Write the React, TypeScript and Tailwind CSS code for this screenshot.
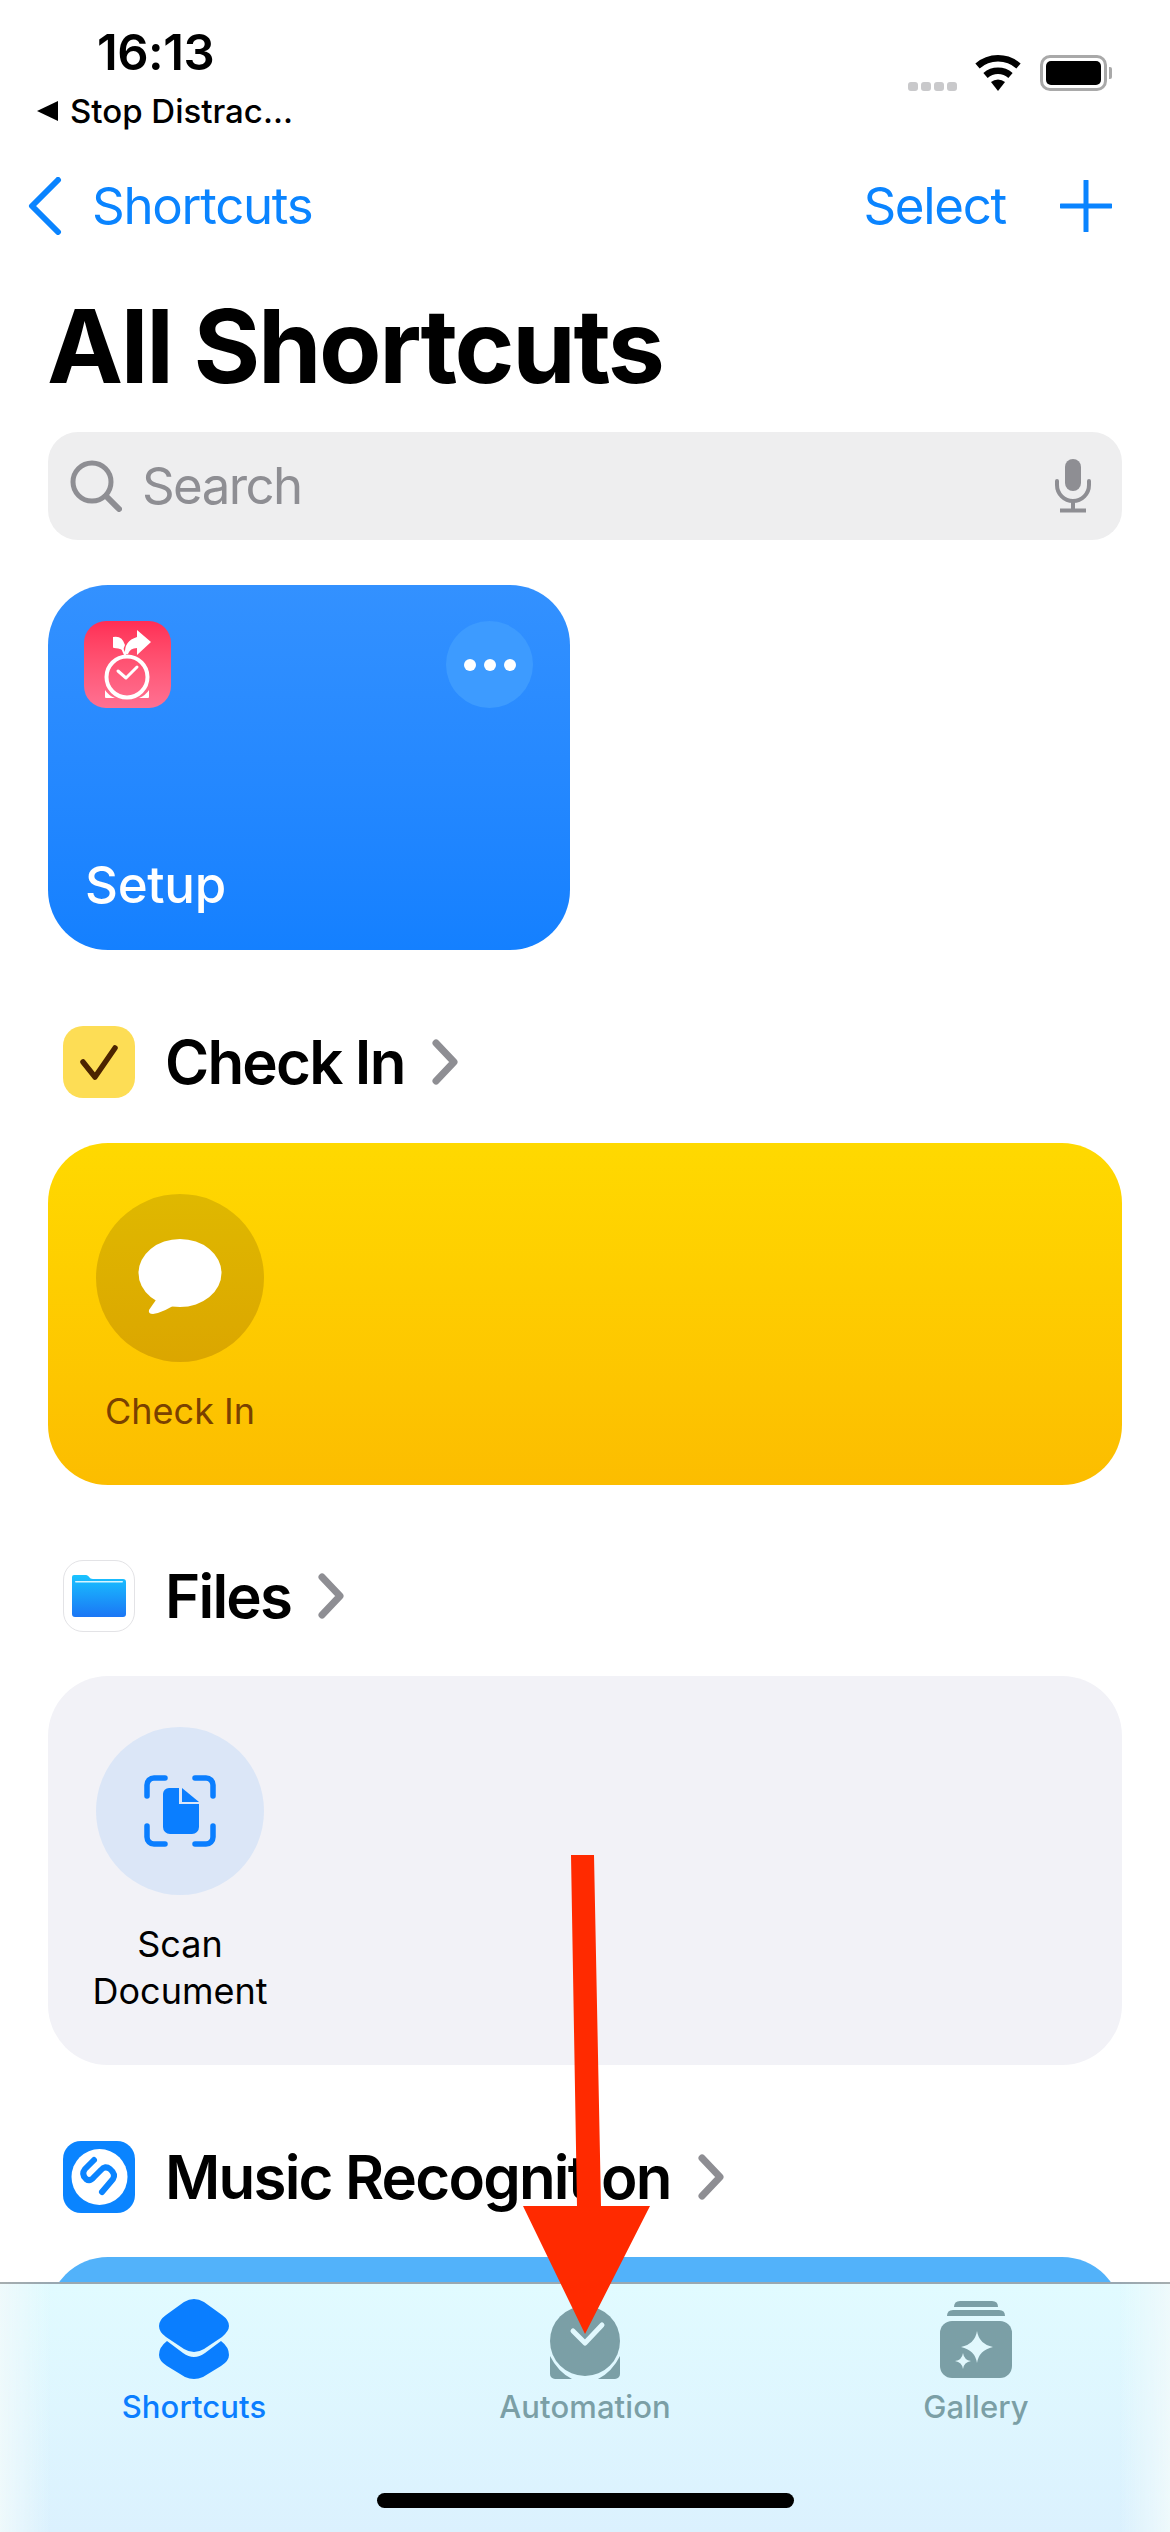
const font = "font-['Inter','Noto_Sans',sans-serif]";

function Chevron({ height = 46 }: { height?: number }) {
  return (
    <svg width="26" height={height} viewBox="0 0 26 46" fill="none">
      <path d="M4 4 L22 23 L4 42" stroke="#8e8e93" strokeWidth="7" strokeLinecap="round" strokeLinejoin="round" />
    </svg>
  );
}

function SectionHeader({ icon, title }: { icon: React.ReactNode; title: string }) {
  return (
    <div className="flex h-[72px] items-center pl-[63px]">
      {icon}
      <span className="ml-[30px] text-[60px] font-semibold leading-[72px] tracking-[-1.8px] text-black">{title}</span>
      <span className="ml-[27px] flex">
        <Chevron />
      </span>
    </div>
  );
}

function CheckIcon() {
  return (
    <div className="h-[72px] w-[72px] rounded-[20px] bg-[#fddd55]">
      <svg width="72" height="72" viewBox="0 0 72 72" fill="none">
        <path d="M20 36 L32 51 L52 22" stroke="#4b2300" strokeWidth="5.5" strokeLinecap="round" strokeLinejoin="round" />
      </svg>
    </div>
  );
}

function FilesIcon() {
  return (
    <div className="flex h-[72px] w-[72px] items-center justify-center rounded-[20px] border border-[#e3e3e6] bg-white">
      <svg width="54" height="42" viewBox="0 0 54 42">
        <defs>
          <linearGradient id="folder" x1="0" y1="0" x2="0" y2="1">
            <stop offset="0" stopColor="#19c3ff" />
            <stop offset="1" stopColor="#1b76f5" />
          </linearGradient>
        </defs>
        <path d="M2 0 H14 C17 0 17 4 21 4 H51 A3 3 0 0 1 54 7 V39 A3 3 0 0 1 51 42 H3 A3 3 0 0 1 0 39 V2 A2 2 0 0 1 2 0 Z" fill="url(#folder)" />
        <rect x="3" y="6" width="48" height="1.6" rx="0.8" fill="#d8f5ff" />
      </svg>
    </div>
  );
}

function ShazamIcon() {
  return (
    <div className="h-[72px] w-[72px] rounded-[18px] bg-[#0a84ff]">
      <svg width="72" height="72" viewBox="0 0 72 72" fill="none">
        <circle cx="36.5" cy="36" r="28" fill="#fff" />
        <path
          d="M31 19 L22 28 Q18 33 23 38 Q27 41 31 36 L38 29 Q42 24 47 28 Q53 33 50 38 L39 51"
          stroke="#0a84ff"
          strokeWidth="6"
          strokeLinecap="round"
          strokeLinejoin="round"
        />
      </svg>
    </div>
  );
}

function Wifi() {
  return (
    <svg width="48" height="36" viewBox="0 0 48 36" fill="none">
      <path d="M24 36 L17 27 A11 11 0 0 1 31 27 Z" fill="#000" />
      <path d="M11.5 20.5 A19 19 0 0 1 36.5 20.5" stroke="#000" strokeWidth="6.5" />
      <path d="M3.5 11 A31 31 0 0 1 44.5 11" stroke="#000" strokeWidth="6.5" />
    </svg>
  );
}

function StatusBar() {
  return (
    <div className="flex h-[150px] justify-between">
      <div className="flex flex-col">
        <span className="mt-[24px] pl-[97px] text-[49px] font-semibold leading-[58px] tracking-[-0.5px] text-black">16:13</span>
        <div className="mt-[12px] flex h-[34px] items-center pl-[37px]">
          <svg width="22" height="22" viewBox="0 0 22 22">
            <path d="M0 11 L21 1 V21 Z" fill="#000" />
          </svg>
          <span className="ml-[11px] text-[33px] font-medium leading-[34px] text-black">Stop Distrac...</span>
        </div>
      </div>
      <div className="flex items-start pr-[58px] pt-[55px]">
        <div className="mt-[27px] flex gap-[3px]">
          <div className="h-[9px] w-[10px] rounded-[3px] bg-[#c9c9cb]" />
          <div className="h-[9px] w-[10px] rounded-[3px] bg-[#c9c9cb]" />
          <div className="h-[9px] w-[10px] rounded-[3px] bg-[#c9c9cb]" />
          <div className="h-[9px] w-[10px] rounded-[3px] bg-[#c9c9cb]" />
        </div>
        <div className="ml-[17px]">
          <Wifi />
        </div>
        <div className="ml-[18px] flex items-center">
          <div className="h-[36px] w-[67px] rounded-[10px] border-[3px] border-[#a9a9a9] p-[3px]">
            <div className="h-full w-full rounded-[5px] bg-black" />
          </div>
          <div className="ml-[2px] h-[12px] w-[3px] rounded-r-[2px] bg-[#a9a9a9]" />
        </div>
      </div>
    </div>
  );
}

function NavBar() {
  return (
    <div className="mt-[28px] flex h-[56px] items-center justify-between pl-[28px] pr-[58px]">
      <div className="flex items-center">
        <svg width="34" height="58" viewBox="0 0 34 58" fill="none">
          <path d="M30 3 L4 29 L30 55" stroke="#0a84ff" strokeWidth="6" strokeLinecap="round" strokeLinejoin="round" />
        </svg>
        <span className="ml-[30px] text-[51px] leading-[56px] tracking-[-1.3px] text-[#0a84ff]">Shortcuts</span>
      </div>
      <div className="flex items-center">
        <span className="text-[51px] leading-[56px] tracking-[-1.3px] text-[#0a84ff]">Select</span>
        <svg className="ml-[54px]" width="52" height="52" viewBox="0 0 52 52" fill="none">
          <path d="M26 1 V51 M1 26 H51" stroke="#0a84ff" strokeWidth="5" strokeLinecap="round" />
        </svg>
      </div>
    </div>
  );
}

function SearchBar() {
  return (
    <div className="mx-[48px] mt-[36px] flex h-[108px] items-center rounded-[30px] bg-[#eeeeef] pl-[22px] pr-[31px]">
      <svg width="52" height="52" viewBox="0 0 52 52" fill="none">
        <circle cx="22" cy="22" r="19" stroke="#8e8e93" strokeWidth="5" />
        <path d="M36 36 L49 49" stroke="#8e8e93" strokeWidth="6" strokeLinecap="round" />
      </svg>
      <span className="ml-[20px] flex-1 text-[51px] leading-[56px] tracking-[-1.6px] text-[#8e8e93]">Search</span>
      <svg width="36" height="54" viewBox="0 0 36 54" fill="none">
        <rect x="10" y="0" width="16" height="32" rx="8" fill="#8e8e93" />
        <path d="M2 22 V26 A16 16 0 0 0 34 26 V22" stroke="#8e8e93" strokeWidth="4" strokeLinecap="round" />
        <path d="M18 42 V51 M5 51.5 H31" stroke="#8e8e93" strokeWidth="4" />
      </svg>
    </div>
  );
}

function PinkIcon() {
  return (
    <div className="h-[87px] w-[87px] rounded-[22px] bg-gradient-to-b from-[#ff2d55] to-[#ff7092]">
      <svg width="87" height="87" viewBox="0 0 87 87" fill="none">
        <path d="M53 9 L67 21 L53 34 V27 Q46 27 44 33 L41 33 Q40 20 53 16 Z" fill="#fff" />
        <path d="M29 16 Q38 14 41 24 L39 29 Q34 27 30 27 Q29 27 29 26 Z" fill="#fff" />
        <path d="M38 27 L42 36" stroke="#fff" strokeWidth="2" />
        <circle cx="43" cy="56" r="20.5" stroke="#fff" strokeWidth="4" />
        <path d="M34 50 L42 57 L53 46" stroke="#fff" strokeWidth="3" strokeLinecap="round" strokeLinejoin="round" />
        <path d="M21 69 Q24 74 31 77 H22 A1 1 0 0 1 21 76 Z M65 69 Q62 74 55 77 H64 A1 1 0 0 0 65 76 Z" fill="#fff" />
      </svg>
    </div>
  );
}

function SetupCard() {
  return (
    <div className="ml-[48px] mt-[45px] flex h-[365px] w-[522px] flex-col justify-between rounded-[60px] bg-gradient-to-b from-[#3391ff] to-[#1480ff] px-[36px] pb-[35px] pt-[36px]">
      <div className="flex items-start justify-between pr-[1px]">
        <PinkIcon />
        <div className="flex h-[87px] w-[87px] items-center justify-center gap-[8px] rounded-full bg-[#3d9bff]">
          <div className="h-[12px] w-[12px] rounded-full bg-white" />
          <div className="h-[12px] w-[12px] rounded-full bg-white" />
          <div className="h-[12px] w-[12px] rounded-full bg-white" />
        </div>
      </div>
      <span className="pl-[1px] text-[51px] font-medium leading-[60px] tracking-[-0.3px] text-white">Setup</span>
    </div>
  );
}

function TabBar() {
  return (
    <div className="absolute bottom-0 left-0 right-0 h-[250px] border-t-[2px] border-[#000]/30 bg-[linear-gradient(90deg,#eef9fb_0,rgba(238,249,251,0)_50px,rgba(238,249,251,0)_1120px,#eef9fb_1170px),linear-gradient(180deg,#e1fbff,#dbf1fe)]">
      <div className="flex">
        <div className="flex w-[388px] flex-col items-center pt-[15px]">
          <svg className="shrink-0" width="70" height="80" viewBox="0 0 70 80">
            <path d="M8 42 L24 54 Q35 62 46 54 L62 42 Q70 48 70 56 Q70 62 62 67 L44 78 Q35 82 26 78 L8 67 Q0 62 0 56 Q0 48 8 42 Z" fill="#0a7eff" />
            <path d="M25 3 Q35 -3 45 3 L63 16 Q70 21 70 27 Q70 32 63 38 L45 50 Q35 56 25 50 L7 38 Q0 33 0 27 Q0 21 7 16 Z" fill="#0a7eff" />
          </svg>
          <span className="mt-[10px] text-[31px] font-medium leading-[36px] tracking-[0.1px] text-[#0a7eff]">Shortcuts</span>
        </div>
        <div className="flex w-[394px] flex-col items-center pt-[20px]">
          <svg className="shrink-0" width="70" height="75" viewBox="0 0 70 75">
            <path d="M0 52 Q8 68 22 75 H5 A5 5 0 0 1 0 70 Z M70 52 Q62 68 48 75 H65 A5 5 0 0 0 70 70 Z" fill="#7b9fa6" />
            <circle cx="35" cy="37" r="35" fill="#7b9fa6" />
            <path d="M23 27 L35 39 L52 21" fill="none" stroke="#e1f8fd" strokeWidth="5" strokeLinecap="round" strokeLinejoin="round" />
          </svg>
          <span className="mt-[10px] text-[31px] font-medium leading-[36px] tracking-[0.1px] text-[#7b9fa6]">Automation</span>
        </div>
        <div className="flex w-[388px] flex-col items-center pt-[16px]">
          <svg className="shrink-0" width="72" height="78" viewBox="0 0 72 78">
            <path d="M14 7 Q14 1 20 1 H52 Q58 1 58 7 Z" fill="#7b9fa6" />
            <path d="M7 16 Q7 10 13 10 H59 Q65 10 65 16 Z" fill="#7b9fa6" />
            <rect x="0" y="21" width="72" height="57" rx="12" fill="#7b9fa6" />
            <path d="M37 31 Q39 44 53 47 Q39 50 37 63 Q35 50 21 47 Q35 44 37 31 Z" fill="#e1f8fd" />
            <path d="M23 53 Q24 60 31 61 Q24 62 23 69 Q22 62 15 61 Q22 60 23 53 Z" fill="#e1f8fd" />
          </svg>
          <span className="mt-[11px] text-[31px] font-medium leading-[36px] tracking-[0.1px] text-[#7b9fa6]">Gallery</span>
        </div>
      </div>
      <div className="absolute bottom-[24px] left-[377px] h-[15px] w-[417px] rounded-full bg-black" />
    </div>
  );
}

export default function App() {
  return (
    <div className={`relative h-[2532px] w-[1170px] overflow-hidden bg-white ${font}`}>
      <StatusBar />
      <NavBar />
      <h1 className="ml-[47px] mt-[62px] h-[100px] text-[102px] font-bold leading-[100px] tracking-[-2.3px] text-black">All Shortcuts</h1>
      <SearchBar />
      <SetupCard />

      <div className="mt-[76px]">
        <SectionHeader icon={<CheckIcon />} title="Check In" />
      </div>
      <div className="mx-[48px] mt-[45px] h-[342px] rounded-[60px] bg-gradient-to-b from-[#ffd900] to-[#fcbd00] pl-[48px] pt-[51px]">
        <div className="flex w-[168px] flex-col items-center">
          <div className="flex h-[168px] w-[168px] items-center justify-center rounded-full bg-gradient-to-b from-[#dfb800] to-[#dba600]">
            <svg width="84" height="78" viewBox="0 0 84 78">
              <ellipse cx="42" cy="34" rx="41.5" ry="34" fill="#fff" />
              <path d="M20 58 L11 71 Q10 75 15 75 Q27 73 39 64 Z" fill="#fff" />
            </svg>
          </div>
          <span className="mt-[28px] whitespace-nowrap text-[36px] leading-[42px] text-[#7a4100]">Check In</span>
        </div>
      </div>

      <div className="mt-[75px]">
        <SectionHeader icon={<FilesIcon />} title="Files" />
      </div>
      <div className="mx-[48px] mt-[44px] h-[389px] rounded-[60px] bg-[#f2f2f7] pl-[48px] pt-[51px]">
        <div className="flex w-[168px] flex-col items-center">
          <div className="flex h-[168px] w-[168px] items-center justify-center rounded-full bg-[#dbe6f7]">
            <svg width="72" height="72" viewBox="0 0 72 72" fill="none">
              <path d="M3 21 V10 A7 7 0 0 1 10 3 H21 M51 3 H62 A7 7 0 0 1 69 10 V21 M69 51 V62 A7 7 0 0 1 62 69 H51 M21 69 H10 A7 7 0 0 1 3 62 V51" stroke="#0a7eff" strokeWidth="5.5" strokeLinecap="round" />
              <path d="M25 13 H35 V29 H55 V52 A7 7 0 0 1 48 59 H26 A7 7 0 0 1 19 52 V19 A6 6 0 0 1 25 13 Z" fill="#0a7eff" />
              <path d="M38 13 L55 27 H38 Z" fill="#0a7eff" />
            </svg>
          </div>
          <span className="mt-[26px] whitespace-nowrap text-center text-[36px] leading-[47px] text-black">
            Scan
            <br />
            Document
          </span>
        </div>
      </div>

      <div className="mt-[76px]">
        <SectionHeader icon={<ShazamIcon />} title="Music Recognition" />
      </div>
      <div className="mx-[48px] mt-[44px] h-[200px] rounded-t-[60px] bg-[#52b2fa]" />

      <TabBar />

      {/* red annotation arrow drawn on the screenshot */}
      <svg className="absolute left-[520px] top-[1850px]" width="140" height="490" viewBox="0 0 140 490">
        <path d="M51 5 H74 L81 356 H130 L65 484 L3 356 H57 Z" fill="#ff2a00" />
      </svg>
    </div>
  );
}
